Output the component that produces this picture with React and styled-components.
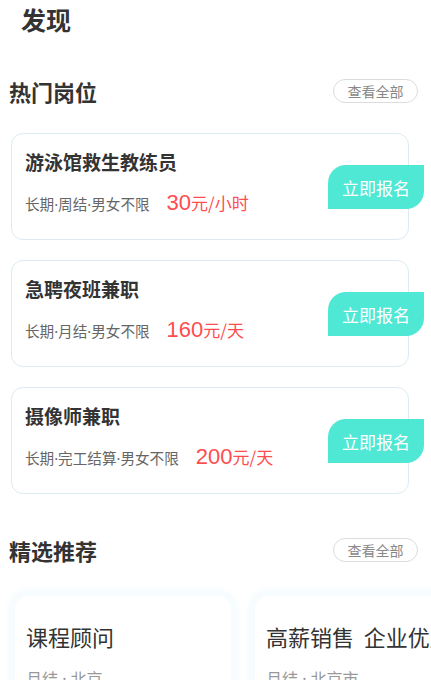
import React from 'react'
import styled, { createGlobalStyle } from 'styled-components'

const GlobalStyle = createGlobalStyle`
  body {
    margin: 0;
    background: #fff;
    font-family: "Noto Sans CJK SC", "Noto Sans", sans-serif;
    overflow: hidden;
  }
`

const Page = styled.div`
  width: 431px;
  height: 680px;
  overflow: hidden;
`

const PageTitle = styled.h1`
  margin: 0;
  padding: 2px 0 0 21px;
  font-size: 25px;
  line-height: 35px;
  font-weight: 700;
  color: #333;
`

const SectionHead = styled.div`
  display: flex;
  align-items: center;
  justify-content: space-between;
  padding: 0 13px 0 9px;
  margin-top: ${props => props.top}px;
  height: 32px;
`

const SectionTitle = styled.h2`
  margin: 0;
  font-size: 22px;
  font-weight: 700;
  color: #333;
  line-height: 32px;
`

const MoreButton = styled.button`
  height: 24px;
  width: 85px;
  border: 1.5px solid #dcdcdc;
  border-radius: 12px;
  background: #fff;
  color: #888;
  font-family: inherit;
  font-size: 14px;
  line-height: 20px;
  padding: 0;
`

const JobList = styled.div`
  display: flex;
  flex-direction: column;
  gap: 20px;
  padding: 0 22px 0 11px;
  margin-top: 26px;
`

const JobCard = styled.div`
  position: relative;
  height: 107px;
  box-sizing: border-box;
  border: 1.5px solid #dcebf2;
  border-radius: 12px;
  padding: 14px 0 0 13px;
`

const JobName = styled.div`
  font-size: 19px;
  font-weight: 700;
  color: #333;
  line-height: 28px;
`

const JobMeta = styled.div`
  display: flex;
  align-items: baseline;
  margin-top: 14px;
`

const Tags = styled.span`
  font-family: "Noto Sans", "Noto Sans CJK SC", sans-serif;
  font-size: 14.6px;
  color: #666;
`

const Price = styled.span`
  margin-left: 17px;
  color: #ff4d4f;
  font-size: 17px;
  b {
    font-family: "Liberation Sans", Arial, sans-serif;
    font-weight: 400;
    font-size: 22px;
  }
`

const ApplyButton = styled.button`
  position: absolute;
  right: -16px;
  top: 31px;
  width: 96px;
  height: 44px;
  border: none;
  background: #4fe8d5;
  color: #fff;
  font-family: inherit;
  font-size: 17px;
  border-radius: 18px 0 18px 0;
  padding: 0;
`

const PickRow = styled.div`
  display: flex;
  gap: 24px;
  padding-left: 15px;
  margin-top: 30px;
`

const PickCard = styled.div`
  flex: 0 0 216px;
  height: 120px;
  box-sizing: border-box;
  border-radius: 14px;
  background: #fff;
  box-shadow: 0 0 0 5px #f7fcfe, 0 0 8px 6px #f4fafd;
  padding: 24px 0 0 11px;
  white-space: pre;
`

const PickName = styled.div`
  font-size: 22px;
  color: #333;
  line-height: 32px;
`

const PickMeta = styled.div`
  margin-top: 14px;
  font-family: "Noto Sans", "Noto Sans CJK SC", sans-serif;
  font-size: 16px;
  color: #999;
`

const jobs = [
  { name: '游泳馆救生教练员', tags: '长期·周结·男女不限', price: '30', unit: '元/小时' },
  { name: '急聘夜班兼职', tags: '长期·月结·男女不限', price: '160', unit: '元/天' },
  { name: '摄像师兼职', tags: '长期·完工结算·男女不限', price: '200', unit: '元/天' },
]

const picks = [
  { name: '课程顾问', meta: '月结 · 北京' },
  { name: '高薪销售  企业优质岗位', meta: '月结 · 北京市' },
]

const App = () => {
  return (
    <Page>
      <GlobalStyle />
      <PageTitle>发现</PageTitle>

      <SectionHead top={38}>
        <SectionTitle>热门岗位</SectionTitle>
        <MoreButton>查看全部</MoreButton>
      </SectionHead>

      <JobList>
        {jobs.map(job => (
          <JobCard key={job.name}>
            <JobName>{job.name}</JobName>
            <JobMeta>
              <Tags>{job.tags}</Tags>
              <Price><b>{job.price}</b>{job.unit}</Price>
            </JobMeta>
            <ApplyButton>立即报名</ApplyButton>
          </JobCard>
        ))}
      </JobList>

      <SectionHead top={40}>
        <SectionTitle>精选推荐</SectionTitle>
        <MoreButton>查看全部</MoreButton>
      </SectionHead>

      <PickRow>
        {picks.map(p => (
          <PickCard key={p.name}>
            <PickName>{p.name}</PickName>
            <PickMeta>{p.meta}</PickMeta>
          </PickCard>
        ))}
      </PickRow>
    </Page>
  )
}

export default App
